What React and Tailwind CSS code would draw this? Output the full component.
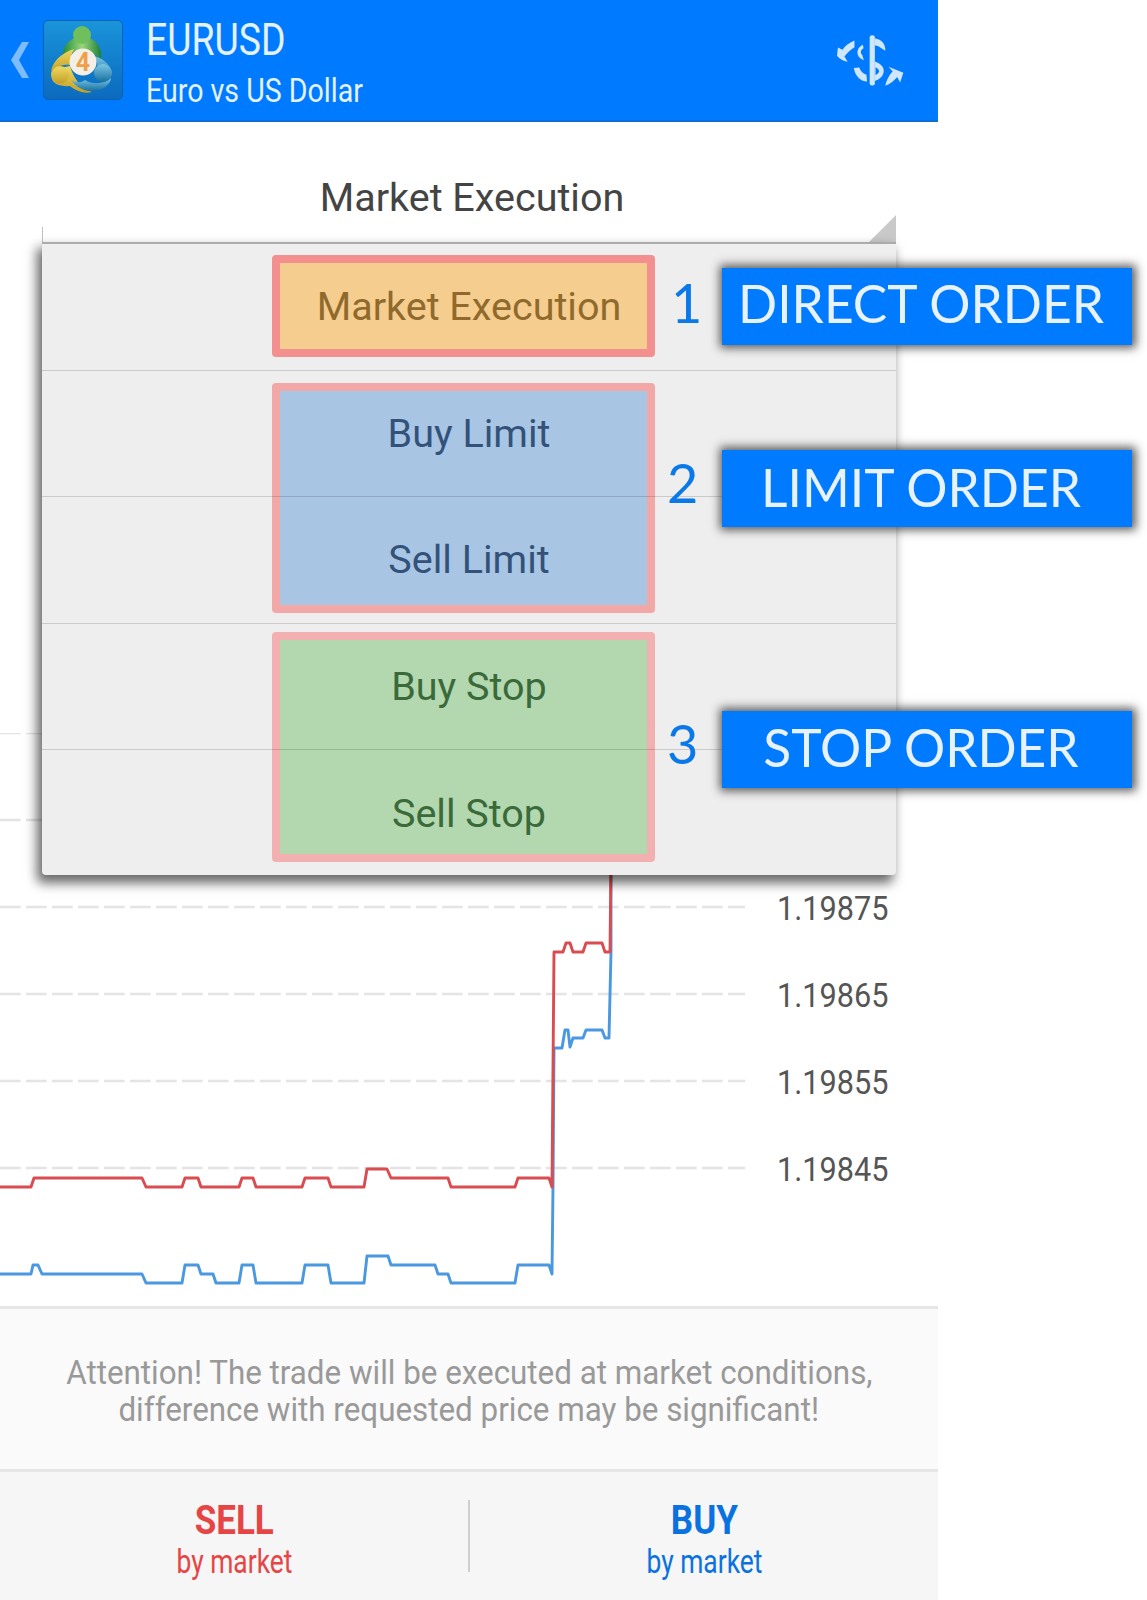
import React from "react";

const redLine =
  "0,1187 31,1187 34,1178 142,1178 146,1187 182,1187 185,1178 198,1178 201,1187 239,1187 242,1178 253,1178 256,1187 302,1187 305,1178 328,1178 331,1187 364,1187 367,1169 387,1169 391,1178 448,1178 451,1187 515,1187 518,1178 549,1178 552,1187 554,952 563,952 566,943 570,943 573,952 583,952 586,943 602,943 605,952 610,952 611,860";

const blueLine =
  "0,1274 31,1274 33,1265 38,1265 42,1274 142,1274 146,1283 182,1283 185,1265 198,1265 201,1274 213,1274 216,1283 239,1283 242,1265 253,1265 256,1283 302,1283 305,1265 328,1265 331,1283 364,1283 367,1256 388,1256 391,1265 435,1265 438,1274 448,1274 451,1283 515,1283 518,1265 549,1265 552,1274 553,1187 554,1048 562,1048 565,1030 568,1030 570,1047 573,1038 583,1038 586,1030 602,1030 605,1038 609,1038 611,952 611,860";

const gridRows = [733, 820, 907, 994, 1081, 1168];
const prices = ["1.19875", "1.19865", "1.19855", "1.19845"];

const AppLogo = () => (
  <div className="w-[80px] h-[80px] rounded-[5px] bg-gradient-to-b from-[#1a94da] to-[#0c6abf] border border-[#0d62ad] shrink-0">
    <svg width="78" height="78" viewBox="1 1 78 78">
      <defs>
        <linearGradient id="verde" x1="0" y1="0" x2="1" y2="0">
          <stop offset="0" stopColor="#1f8a3c" />
          <stop offset="0.5" stopColor="#9ad67a" />
          <stop offset="1" stopColor="#1c7f38" />
        </linearGradient>
        <linearGradient id="amarillo" x1="0" y1="0" x2="0" y2="1">
          <stop offset="0" stopColor="#f0d860" />
          <stop offset="1" stopColor="#c29f28" />
        </linearGradient>
        <linearGradient id="azul" x1="0" y1="0" x2="0" y2="1">
          <stop offset="0" stopColor="#7cc6e6" />
          <stop offset="1" stopColor="#17709f" />
        </linearGradient>
      </defs>
      <path d="M20 40C18 24 29 17 39 17C51 17 60 25 58 41C53 34 46 30 39 30C31 30 25 34 20 40Z" fill="url(#verde)" />
      <circle cx="39" cy="15" r="9" fill="#6fbf5c" />
      <path d="M31 29C18 33 9 42 8 52C13 46 21 44 28 45C27 40 28 34 31 29Z" fill="url(#amarillo)" />
      <path d="M27 46C20 47 10 50 9 57C8 64 19 67 27 66C33 71 41 74 49 72C39 69 31 60 27 46Z" fill="url(#amarillo)" />
      <circle cx="17" cy="55" r="9" fill="url(#amarillo)" />
      <path d="M50 36C61 38 70 46 69 58C66 51 60 47 54 47C55 43 53 40 50 36Z" fill="url(#azul)" />
      <path d="M28 60C35 70 48 74 59 69C65 66 68 61 68 58C61 64 50 65 42 60C38 63 33 63 28 60Z" fill="url(#azul)" />
      <circle cx="60" cy="53" r="9" fill="url(#azul)" />
      <circle cx="40" cy="42" r="13.5" fill="#f4efe6" />
      <text x="40" y="51" textAnchor="middle" fontSize="25" fontWeight="700" fill="#eda04a" fontFamily="Roboto, sans-serif">
        4
      </text>
    </svg>
  </div>
);

const DollarIcon = () => (
  <svg width="68" height="53" viewBox="165 95 210 160" fill="#cfe6fd">
    <rect x="269" y="97" width="16" height="155" rx="7" />
    <path d="M285 106C306 110 319 124 317 145L296 131L285 128Z" />
    <path d="M248 126C226 136 224 164 251 174L246 158C240 152 240 142 250 137Z" />
    <path d="M220 198C224 224 243 240 261 240L259 219C249 217 241 209 237 197Z" />
    <path
      fillRule="evenodd"
      d="M285 178C305 185 315 197 312 211C309 226 298 233 285 238ZM287 196L287 220C294 216 298 212 298 208C298 203 293 199 287 196Z"
    />
    <path d="M222 113C205 120 193 130 185 142L171 135L168 160C176 170 188 177 201 179L191 163C199 152 210 142 222 134Z" />
    <path d="M317 253C322 232 330 220 340 208L327 194L373 213L363 243L354 226C344 238 332 248 317 253Z" />
  </svg>
);

const MenuRow = ({ children, color }) => (
  <div className="h-[126.6px] border-b border-black/15 flex items-center justify-center relative z-10">
    <span className="text-[39.5px] leading-none" style={{ color }}>
      {children}
    </span>
  </div>
);

const Highlight = ({ top, height, border, fill }) => (
  <div
    className="absolute left-[230px] w-[383px] border-[8px] rounded-[4px]"
    style={{ top, height, borderColor: border, backgroundColor: fill }}
  />
);

const OrderLabel = ({ top, textShift, numberLeft, numberTop, number, children }) => (
  <>
    <div
      className="absolute text-[#0a78e8] text-[54px] leading-none font-['Lato',sans-serif] z-30"
      style={{ left: numberLeft, top: numberTop }}
    >
      {number}
    </div>
    <div
      className="absolute left-[722px] w-[410px] h-[77px] pr-[12px] bg-[#007bff] text-[#e8f2fc] flex items-center justify-center text-[51.5px] font-['Lato',sans-serif] shadow-[1px_0_9px_3px_rgba(30,30,30,0.72)] z-30"
      style={{ top, paddingBottom: textShift }}
    >
      {children}
    </div>
  </>
);

export default function App() {
  return (
    <div className="relative w-[1147px] h-[1600px] bg-white overflow-hidden font-['Roboto',sans-serif]">
      <div className="flex flex-col w-[938px] h-[1600px]">
        <header className="h-[122px] shrink-0 bg-[#007bff] border-b-2 border-[#0a6fd6] flex items-center pl-[11px] pr-[34px]">
          <svg width="18" height="36" viewBox="0 0 18 36" className="shrink-0">
            <path d="M18 0H11L0 18L11 36H18L8 18Z" fill="#7dbcff" />
          </svg>
          <div className="ml-[14px]">
            <AppLogo />
          </div>
          <div className="ml-[23px] flex-1 flex flex-col text-[#e4f2ff]">
            <span className="text-[44px] leading-[50px] mt-[5px] origin-left scale-x-[0.85] block">EURUSD</span>
            <span className="text-[34px] leading-[42px] mt-[4px] origin-left scale-x-[0.84] block whitespace-nowrap">
              Euro vs US Dollar
            </span>
          </div>
          <DollarIcon />
        </header>

        <main className="relative flex-1 flex flex-col">
          <div className="h-[611px] shrink-0" />
          <div className="flex-1 flex">
            <svg width="760" height="573" viewBox="0 733 760 573" className="shrink-0">
              {gridRows.map((y) => (
                <line key={y} x1="0" y1={y} x2="745" y2={y} stroke="#e4e4e4" strokeWidth="2.4" strokeDasharray="20.7 5.3" />
              ))}
              <polyline points={blueLine} fill="none" stroke="#4a98e0" strokeWidth="2.9" strokeLinejoin="round" />
              <polyline points={redLine} fill="none" stroke="#d94c4f" strokeWidth="2.9" strokeLinejoin="round" />
            </svg>
            <div className="flex flex-col pt-[132px] pl-[17px] text-[#555555]">
              {prices.map((p) => (
                <div key={p} className="h-[87px] flex items-center text-[33px] leading-none origin-left scale-x-[0.93]">
                  {p}
                </div>
              ))}
            </div>
          </div>

          <h1 className="absolute top-[56px] left-[200px] w-[544px] text-center text-[39.5px] leading-[40px] text-[#444444]">
            Market Execution
          </h1>

          <div className="absolute left-[42px] top-[105px] w-[854px] h-[648px]">
            <div className="absolute left-0 top-0 w-px h-[16px] bg-[#c0c0c0]" />
            <svg width="28" height="28" viewBox="0 0 28 28" className="absolute right-0 top-[-12px]">
              <path d="M0 28L28 0V28Z" fill="#c9c9c9" />
            </svg>
            <div className="absolute left-0 right-0 top-[15px] bottom-0 bg-[#eeeeee] border-t-2 border-[#ababab] rounded-b-[4px] shadow-[-4px_7px_12px_1px_rgba(0,0,0,0.6)]">
              <Highlight top={11} height={102} border="#f48f8f" fill="#f5cd8f" />
              <Highlight top={139} height={230} border="#f3a8a8" fill="#a9c5e4" />
              <Highlight top={388} height={230} border="#f3b0b0" fill="#b3d8b0" />
              <MenuRow color="#8f6a2c">Market Execution</MenuRow>
              <MenuRow color="#33527a">Buy Limit</MenuRow>
              <MenuRow color="#33527a">Sell Limit</MenuRow>
              <MenuRow color="#3a6a3a">Buy Stop</MenuRow>
              <div className="h-[126px] pt-[1px] flex items-center justify-center relative z-10">
                <span className="text-[39.5px] leading-none text-[#3a6a3a]">Sell Stop</span>
              </div>
            </div>
          </div>
        </main>

        <section className="h-[166px] shrink-0 pt-[3px] bg-[#fafafa] border-y-[3px] border-[#e6e6e6] flex flex-col items-center justify-center text-[#999999] text-[33px] leading-[37px] whitespace-nowrap">
          <span className="scale-x-[0.95]">Attention! The trade will be executed at market conditions,</span>
          <span className="scale-x-[0.95]">difference with requested price may be significant!</span>
        </section>

        <footer className="flex-1 pt-[8px] bg-[#f6f6f6] flex items-center">
          <div className="flex-1 flex flex-col items-center text-[#e64545]">
            <span className="text-[40px] leading-[44px] font-bold scale-x-[0.875]">SELL</span>
            <span className="text-[33px] leading-[38px] scale-x-[0.8]">by market</span>
          </div>
          <div className="w-[2px] h-[72px] -mt-[8px] bg-[#cfcfcf]" />
          <div className="flex-1 flex flex-col items-center text-[#0a72e0]">
            <span className="text-[40px] leading-[44px] font-bold scale-x-[0.875]">BUY</span>
            <span className="text-[33px] leading-[38px] scale-x-[0.8]">by market</span>
          </div>
        </footer>
      </div>

      <OrderLabel top={268} textShift={6} numberLeft={671} numberTop={276} number="1">
        DIRECT ORDER
      </OrderLabel>
      <OrderLabel top={450} textShift={2} numberLeft={667} numberTop={456} number="2">
        LIMIT ORDER
      </OrderLabel>
      <OrderLabel top={711} textShift={4} numberLeft={667} numberTop={717} number="3">
        STOP ORDER
      </OrderLabel>
    </div>
  );
}
